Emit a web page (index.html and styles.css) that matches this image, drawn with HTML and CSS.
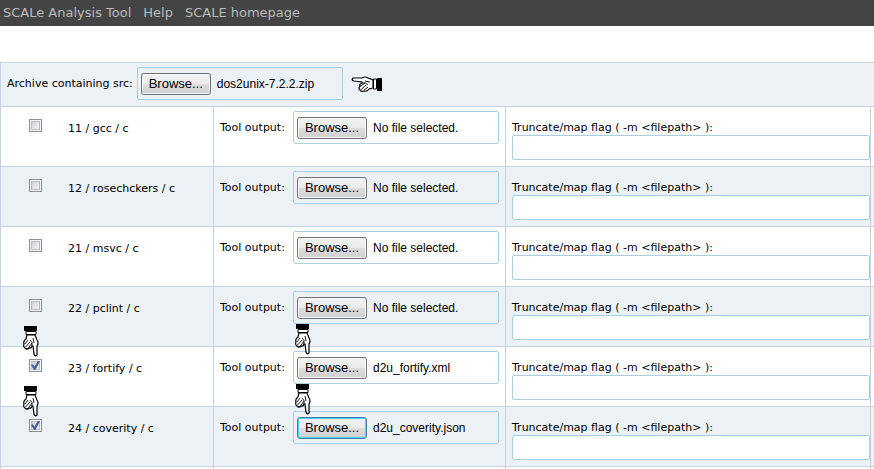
FILE: index.html
```html
<!DOCTYPE html>
<html lang="en">
<head>
<meta charset="utf-8">
<title>SCALe Analysis Tool</title>
<link rel="stylesheet" href="styles.css">
</head>
<body>
<svg class="defs" aria-hidden="true">
  <symbol id="hand" viewBox="0 0 16 31">
    <path d="M4 9 L3 13 Q0 15 1 18 Q0 21 2 22 Q4 24 6 22 Q8 23 9 20 L10 20 L11 28 Q12 31 14 29 L14 20 Q16 17 14 14 L12 9 Z" fill="#fff" stroke="#000" stroke-width="1.2"/>
    <path d="M2 18 L5 14 M2.5 21 L7 16 M5.5 22 L9 17 M9 20 Q10 16 7 14 M10 12 L11 17" fill="none" stroke="#000" stroke-width=".9"/>
    <path d="M3 5.500 H13 V8.500 H3 Z" fill="#fff" stroke="#000"/>
    <path d="M1 0 H14 V5 H1 Z" fill="#000"/>
  </symbol>
</svg>
<nav class="topbar">
  <a href="#">SCALe Analysis Tool</a>
  <a href="#">Help</a>
  <a href="#">SCALE homepage</a>
</nav>
<main>
<table class="tools">
  <colgroup><col class="c-name"><col class="c-output"><col><col class="c-end"></colgroup>
  <tbody>
  <tr class="archive">
    <td colspan="4"><div class="field"><label for="src">Archive containing src:</label>
      <div class="picker"><button type="button" id="src">Browse...</button><span>dos2unix-7.2.2.zip</span></div>
      <svg class="hand-left" viewBox="0 0 31 16" aria-hidden="true"><g transform="matrix(0 -1 -1 0 31 16)"><use href="#hand" width="16" height="31"/></g></svg></div></td>
  </tr>
  <tr>
    <td><div class="name"><input type="checkbox" id="t11"><label for="t11">11 / gcc / c</label></div></td>
    <td><div class="field"><label for="o11">Tool output:</label><div class="picker"><button type="button" id="o11">Browse...</button><span>No file selected.</span></div></div></td>
    <td><div class="flag"><label for="f11">Truncate/map flag ( -m &lt;filepath&gt; ):</label><input type="text" id="f11"></div></td>
    <td></td>
  </tr>
  <tr>
    <td><div class="name"><input type="checkbox" id="t12"><label for="t12">12 / rosechckers / c</label></div></td>
    <td><div class="field"><label for="o12">Tool output:</label><div class="picker"><button type="button" id="o12">Browse...</button><span>No file selected.</span></div></div></td>
    <td><div class="flag"><label for="f12">Truncate/map flag ( -m &lt;filepath&gt; ):</label><input type="text" id="f12"></div></td>
    <td></td>
  </tr>
  <tr>
    <td><div class="name"><input type="checkbox" id="t21"><label for="t21">21 / msvc / c</label></div></td>
    <td><div class="field"><label for="o21">Tool output:</label><div class="picker"><button type="button" id="o21">Browse...</button><span>No file selected.</span></div></div></td>
    <td><div class="flag"><label for="f21">Truncate/map flag ( -m &lt;filepath&gt; ):</label><input type="text" id="f21"></div></td>
    <td></td>
  </tr>
  <tr>
    <td><div class="name"><input type="checkbox" id="t22"><label for="t22">22 / pclint / c</label></div></td>
    <td><div class="field"><label for="o22">Tool output:</label><div class="picker"><button type="button" id="o22">Browse...</button><span>No file selected.</span></div></div></td>
    <td><div class="flag"><label for="f22">Truncate/map flag ( -m &lt;filepath&gt; ):</label><input type="text" id="f22"></div></td>
    <td></td>
  </tr>
  <tr>
    <td><div class="name"><svg class="hand-down" aria-hidden="true"><use href="#hand"/></svg><input type="checkbox" id="t23" checked><label for="t23">23 / fortify / c</label></div></td>
    <td><div class="field"><label for="o23">Tool output:</label><div class="picker"><svg class="hand-down" aria-hidden="true"><use href="#hand"/></svg><button type="button" id="o23">Browse...</button><span>d2u_fortify.xml</span></div></div></td>
    <td><div class="flag"><label for="f23">Truncate/map flag ( -m &lt;filepath&gt; ):</label><input type="text" id="f23"></div></td>
    <td></td>
  </tr>
  <tr>
    <td><div class="name"><svg class="hand-down" aria-hidden="true"><use href="#hand"/></svg><input type="checkbox" id="t24" checked><label for="t24">24 / coverity / c</label></div></td>
    <td><div class="field"><label for="o24">Tool output:</label><div class="picker"><svg class="hand-down" aria-hidden="true"><use href="#hand"/></svg><button type="button" id="o24" class="active">Browse...</button><span>d2u_coverity.json</span></div></div></td>
    <td><div class="flag"><label for="f24">Truncate/map flag ( -m &lt;filepath&gt; ):</label><input type="text" id="f24"></div></td>
    <td></td>
  </tr>
  <tr><td></td><td></td><td></td><td></td></tr>
  </tbody>
</table>
</main>
</body>
</html>
```
FILE: styles.css
```css
* { box-sizing: border-box; }
body {
  margin: 0;
  background: #fff;
  color: #000;
  font: 11px/14px Verdana, "DejaVu Sans", sans-serif;
}
.defs { position: absolute; width: 0; height: 0; }

.topbar {
  display: flex;
  gap: 12px;
  padding: 4px 3px;
  background: #444;
  font-size: 13px;
  line-height: 18px;
}
.topbar a { color: #bbb; text-decoration: none; }

main { padding-top: 36px; }
.tools { width: 100%; table-layout: fixed; border-collapse: separate; border-spacing: 0; border-left: 1px solid #c3d3e4; }
.c-name { width: 213px; }
.c-output { width: 292px; }
.c-end { width: 3px; }
.tools td {
  height: 60px;
  padding: 0;
  vertical-align: top;
  border-top: 1px solid #c3d3e4;
  border-right: 1px solid #c3d3e4;
}
.tools td:last-child { border-right: 0; }
.tools tr:nth-child(odd) { background: #ebf1f5; }
.tools tr:last-child { background: #fff; }
.tools .archive td { height: 44px; }
.tools tr:last-child td { height: 3px; }

.field { display: flex; align-items: center; padding: 4px 6px; gap: 4px; }
.field label { min-width: 69px; }
.picker {
  position: relative;
  display: flex;
  flex: 1;
  align-items: center;
  gap: 6px;
  height: 33px;
  padding: 0 3px;
  border: 1px solid #aacfe4;
  border-radius: 2px;
  font: 12px/16px "Liberation Sans", Arial, sans-serif;
}
.archive .picker { flex: 0 0 206px; }
button {
  width: 70px;
  height: 22px;
  padding: 0;
  border: 1px solid #707070;
  border-radius: 3px;
  background: linear-gradient(#f2f2f2, #ebebeb 50%, #dddddd 50%, #cfcfcf);
  box-shadow: inset 0 0 0 1px #fafafa;
  color: #000;
  font: inherit;
  font-size: 13px;
}
button.active { border-color: #3c7fb1; box-shadow: inset 0 0 0 1px #48cdf5; }

.name { position: relative; display: flex; align-items: flex-start; gap: 26px; padding: 12px 0 0 28px; }
.name label { padding-top: 3px; }
input[type="checkbox"] {
  appearance: none;
  width: 13px;
  height: 13px;
  margin: 0;
  border: 1px solid #8e8f8f;
  background: linear-gradient(135deg, #cbcfd5, #f6f6f6) 2px 2px / 7px 7px no-repeat #f4f4f4;
  box-shadow: inset 0 0 0 1px #f4f4f4, inset 0 0 0 2px #b8bcc2;
}
input[type="checkbox"]:checked::after {
  content: "";
  display: block;
  width: 9px;
  height: 9px;
  margin: 1px;
  background: #4a5f97;
  clip-path: polygon(0 45%, 20% 35%, 40% 60%, 75% 0, 100% 0, 50% 100%, 35% 100%);
}

.flag { display: flex; flex-direction: column; padding: 14px 0 0 6px; }
.flag input {
  width: 100%;
  height: 25px;
  margin: 0;
  border: 1px solid #aacfe4;
  border-radius: 2px;
  background: #fff;
}

.hand-left { width: 31px; height: 16px; margin-left: 4px; }
.hand-down { position: absolute; width: 16px; height: 31px; }
.name .hand-down { left: 22px; top: -21px; }
.picker .hand-down { left: 1px; top: -28px; }
```
